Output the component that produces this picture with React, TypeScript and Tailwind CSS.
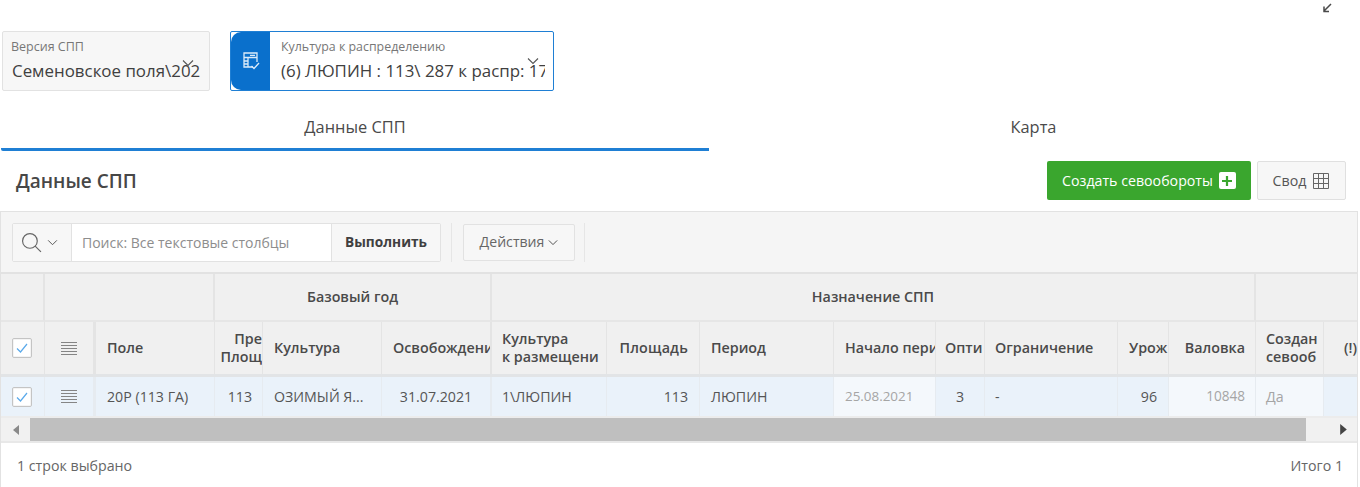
import React from "react";

const Chevron = ({ className = "" }: { className?: string }) => (
  <svg viewBox="0 0 12 8" className={className} fill="none" stroke="currentColor" strokeWidth="1.1">
    <path d="M1 1.500 6 6.500 11 1.500" />
  </svg>
);

const Check = () => (
  <div className="w-[20px] h-[20px] bg-white border border-[#c4c4c4] rounded-[2px] flex items-center justify-center shadow-[inset_0_0_0_1px_#f4f4f4]">
    <svg viewBox="0 0 14 14" className="w-[14px] h-[14px]" fill="none" stroke="#5aa9ea" strokeWidth="1.2">
      <path d="M2 7.500 5.500 11 12 3" />
    </svg>
  </div>
);

const Burger = () => (
  <svg viewBox="0 0 16 13" className="w-[16px] h-[13px]" stroke="#858585" strokeWidth="1">
    <path d="M0 .5h16M0 3.500h16M0 6.500h16M0 9.500h16M0 12.500h16" />
  </svg>
);

const H = ({ children, className = "" }: { children?: React.ReactNode; className?: string }) => (
  <div className={`bg-[#f0f0f0] border-r border-[#e4e4e4] flex items-center overflow-hidden whitespace-nowrap font-semibold text-[14.3px] leading-[18px] text-[#4a4a4a] ${className}`}>
    {children}
  </div>
);

const C = ({ children, className = "" }: { children?: React.ReactNode; className?: string }) => (
  <div className={`bg-[#eaf2fa] border-r border-[#e6ebf0] flex items-center overflow-hidden whitespace-nowrap text-[14.2px] text-[#555] ${className}`}>
    {children}
  </div>
);

const columns =
  "grid-cols-[44px_51px_119px_48px_119px_110px_115px_93px_134px_102px_49px_133px_51px_87px_68px_minmax(0,1fr)]";

export default function App() {
  return (
    <div className="w-[1360px] h-[487px] overflow-hidden bg-white font-['Open_Sans','Noto_Sans',sans-serif] text-[#404040]">
      <div className="h-[31px] flex justify-end pr-[24px]">
        <svg viewBox="0 0 14 14" className="w-[14px] h-[14px]" fill="none" stroke="#4a4a4a" strokeWidth="1.500">
          <path d="M9 4 2 11M2 6.500V11.500H7" />
        </svg>
      </div>

      <div className="h-[60px] flex pl-[2px] gap-[20px]">
        <div className="relative w-[208px] h-[60px] bg-[#f7f7f7] border border-[#e2e2e2] rounded-[2px] pl-[8px] pt-[7px] pr-[9px] overflow-hidden">
          <div className="text-[12.5px] leading-[15px] text-[#777]">Версия СПП</div>
          <div className="mt-[6px] ml-px text-[16.9px] leading-[22px] text-[#404040] whitespace-nowrap overflow-hidden">Семеновское поля\2022</div>
          <Chevron className="absolute right-[15px] top-[27px] w-[12px] h-[8px] text-[#555]" />
        </div>
        <div className="relative w-[324px] h-[60px] bg-white border border-[#1f7fd4] rounded-[2px] flex overflow-hidden">
          <div className="w-[39px] bg-[#0a70cc] rounded-l-[10px] flex items-center justify-center shrink-0">
            <svg viewBox="0 0 18 20" className="w-[18px] h-[20px]" fill="none" stroke="#dcebf9" strokeWidth="1.300">
              <path d="M11 16H2V2h13v9" />
              <path d="M2 6.500h13M6 6.500V16M2 10h4M2 13h4M8 4.300h5" />
              <path d="M9.500 15 12 17.500 17 12" />
            </svg>
          </div>
          <div className="pl-[11px] pt-[7px] pr-[8px] overflow-hidden flex-1">
            <div className="text-[12.4px] leading-[15px] text-[#777] whitespace-nowrap">Культура к распределению</div>
            <div className="mt-[6px] text-[16.9px] leading-[22px] text-[#404040] whitespace-nowrap overflow-hidden">(6) ЛЮПИН : 113\ 287 к распр: 17</div>
          </div>
          <Chevron className="absolute right-[14px] top-[25px] w-[12px] h-[8px] text-[#555]" />
        </div>
      </div>

      <div className="h-[60px] flex text-[16.4px] text-[#4a4a4a]">
        <div className="w-[708px] ml-px h-[60px] border-b-[3px] border-[#1f7fd4] flex items-center justify-center pt-[15px] rounded-bl-[2px]">Данные СПП</div>
        <div className="flex-1 mr-[2px] flex items-center justify-center pt-[12px]">Карта</div>
      </div>

      <div className="h-[60px] flex items-start justify-between pl-[16px] pr-[14px]">
        <div className="mt-[17px] text-[19px] leading-[26px] font-semibold text-[#474747]">Данные СПП</div>
        <div className="flex gap-[6px] mt-[10px]">
          <div className="w-[204px] h-[39px] bg-[#3aa62e] rounded-[2px] flex items-center justify-center gap-[6px] text-white text-[14.2px]">
            <span>Создать севообороты</span>
            <span className="w-[17px] h-[17px] bg-white rounded-[2px] flex items-center justify-center">
              <svg viewBox="0 0 9 9" className="w-[10px] h-[10px]" stroke="#3aa62e" strokeWidth="2"><path d="M4.500 0v9M0 4.500h9" /></svg>
            </span>
          </div>
          <div className="w-[89px] h-[39px] bg-[#f7f7f7] border border-[#e0e0e0] rounded-[2px] flex items-center justify-center gap-[6px] text-[14.2px] text-[#555]">
            <span>Свод</span>
            <svg viewBox="0 0 18 18" className="w-[18px] h-[18px]" fill="none" stroke="#666" strokeWidth="1">
              <path d="M1.500 1.500h15v15h-15zM6.500 1.500v15M11.500 1.500v15M1.500 6.500h15M1.500 11.500h15" />
            </svg>
          </div>
        </div>
      </div>

      <div className="w-[1358px] h-[276px] border-t border-x border-[#e2e2e2] flex flex-col">
        <div className="h-[62px] bg-[#f5f5f5] flex items-center pl-[11px] border-b-[2px] border-[#e2e2e2] shrink-0">
          <div className="w-[429px] h-[39px] flex border border-[#e2e2e2] rounded-[2px] bg-white">
            <div className="w-[59px] bg-[#f7f7f7] border-r border-[#e2e2e2] flex items-center pl-[8px] gap-[5px] text-[#555]">
              <svg viewBox="0 0 20 20" className="w-[21px] h-[21px] shrink-0" fill="none" stroke="#666" strokeWidth="1.100">
                <circle cx="8.500" cy="8.500" r="7" /><path d="m13.500 13.500 5.500 5.500" />
              </svg>
              <Chevron className="w-[11px] h-[7px] shrink-0" />
            </div>
            <div className="flex-1 flex items-center pl-[10px] text-[14px] text-[#8d8d8d] whitespace-nowrap">Поиск: Все текстовые столбцы</div>
            <div className="w-[109px] bg-[#f7f7f7] border-l border-[#e2e2e2] flex items-center justify-center text-[13.7px] font-bold text-[#404040]">Выполнить</div>
          </div>
          <div className="ml-[10px] h-[39px] border-l border-[#e6e6e6]" />
          <div className="ml-[11px] w-[112px] h-[37px] bg-[#f7f7f7] border border-[#e2e2e2] rounded-[2px] flex items-center justify-center gap-[4px] text-[14.1px] text-[#666]">
            <span>Действия</span>
            <Chevron className="w-[10px] h-[7px] text-[#444]" />
          </div>
          <div className="ml-[9px] h-[39px] border-l border-[#e6e6e6]" />
        </div>

        <div className={`grid ${columns} grid-rows-[48px_52px] shrink-0 border-b-[3px] border-[#e2e4e6]`}>
          <H className="border-b-[2px] border-b-[#e6e6e6] border-r-[2px]" />
          <H className="col-span-2 border-b-[2px] border-b-[#e6e6e6] border-r-[2px]" />
          <H className="col-span-3 justify-center border-b-[2px] border-b-[#e6e6e6] border-r-[2px]">Базовый год</H>
          <H className="col-span-8 justify-center border-b-[2px] border-b-[#e6e6e6] border-r-[2px]">Назначение СПП</H>
          <H className="col-span-2 border-b-[2px] border-b-[#e6e6e6] border-r-0" />

          <H className="justify-start pl-[11px]"><Check /></H>
          <H className="justify-center border-r-[3px]"><Burger /></H>
          <H className="pl-[11px]">Поле</H>
          <H className="flex-col !items-end justify-center"><span>Пре</span><span>Площ</span></H>
          <H className="pl-[11px]">Культура</H>
          <H className="pl-[11px] border-r-[2px]">Освобождени</H>
          <H className="pl-[10px] flex-col !items-start justify-center"><span>Культура</span><span>к размещени</span></H>
          <H className="justify-end pr-[11px] tracking-[0.2px]">Площадь</H>
          <H className="pl-[11px]">Период</H>
          <H className="pl-[11px]">Начало пери</H>
          <H className="pl-[9px]">Опти</H>
          <H className="pl-[10px]">Ограничение</H>
          <H className="pl-[11px]">Урож</H>
          <H className="justify-end pr-[10px]">Валовка</H>
          <H className="pl-[10px] flex-col !items-start justify-center"><span>Создан</span><span>севооб</span></H>
          <H className="justify-end border-r-0 text-[12px]">(!)</H>
        </div>

        <div className={`grid ${columns} h-[41px] shrink-0 border-b-[2px] border-[#ececec]`}>
          <C className="justify-start pl-[11px]"><Check /></C>
          <C className="justify-center border-r-[3px]"><Burger /></C>
          <C className="pl-[11px]">20Р (113 ГА)</C>
          <C className="justify-end pr-[10px]">113</C>
          <C className="pl-[11px]">ОЗИМЫЙ Я...</C>
          <C className="justify-center border-r-[2px]">31.07.2021</C>
          <C className="pl-[10px]">1\ЛЮПИН</C>
          <C className="justify-end pr-[11px]">113</C>
          <C className="pl-[11px]">ЛЮПИН</C>
          <C className="pl-[11px] !bg-[#f4f8fc] !text-[13.4px] !text-[#a5a5a5]">25.08.2021</C>
          <C className="justify-center">3</C>
          <C className="pl-[10px]">-</C>
          <C className="justify-end pr-[11px]">96</C>
          <C className="justify-end pr-[10px] !bg-[#f4f8fc] !text-[13.6px] !text-[#a5a5a5]">10848</C>
          <C className="pl-[10px] !bg-[#f4f8fc] !text-[#a5a5a5]">Да</C>
          <C className="border-r-0" />
        </div>

        <div className="h-[25px] bg-[#f1f1f1] flex items-center border-b-[2px] border-[#e8e8e8] shrink-0">
          <div className="w-[29px] flex justify-center">
            <svg viewBox="0 0 6 10" className="w-[6px] h-[10px]" fill="#8a8a8a"><path d="M6 0v10L0 5z" /></svg>
          </div>
          <div className="w-[1276px] h-[23px] bg-[#bfbfbf]" />
          <div className="flex-1 flex justify-end pr-[10px]">
            <svg viewBox="0 0 6 10" className="w-[7px] h-[11px]" fill="#444"><path d="M0 0v10l6-5z" /></svg>
          </div>
        </div>

        <div className="flex-1 flex items-center justify-between pl-[16px] pr-[14px] pt-[1px] text-[14.2px] text-[#666] bg-white">
          <span>1 строк выбрано</span>
          <span>Итого 1</span>
        </div>
      </div>
    </div>
  );
}
